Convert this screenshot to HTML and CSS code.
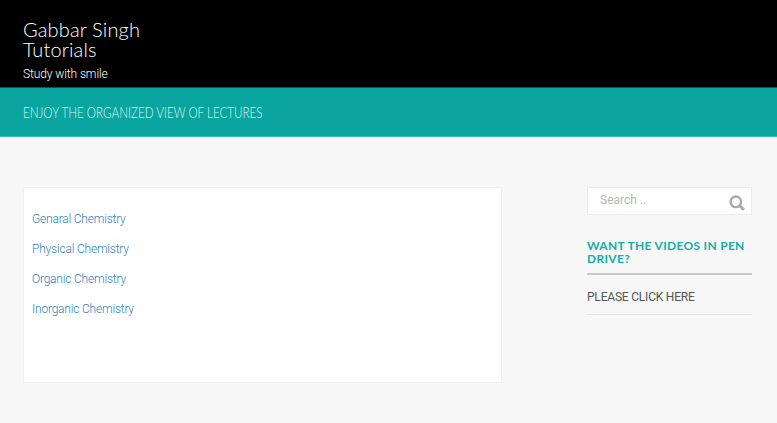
FILE: index.html
```html
<!DOCTYPE html>
<html lang="en">

<head>
	<meta charset="UTF-8" />
	<meta name="viewport" content="width=device-width, initial-scale=1.0" />
	<title>Gabbar Singh Tutorials</title>
	<link rel="stylesheet" href="styles.css">
</head>

<body>
	<header class="site-header">
		<h1 class="site-title">Gabbar Singh<br>Tutorials</h1>
		<p class="site-tagline">Study with smile</p>
	</header>

	<div class="page-banner">
		<h2 class="page-title">ENJOY THE ORGANIZED VIEW OF LECTURES</h2>
	</div>

	<div class="content-wrap">
		<main class="card">
			<p class="card-row"><a href="#">Genaral Chemistry</a></p>
			<p class="card-row"><a href="#">Physical Chemistry</a></p>
			<p class="card-row"><a href="#">Organic Chemistry</a></p>
			<p class="card-row"><a href="#">Inorganic Chemistry</a></p>
		</main>

		<aside class="sidebar">
			<form class="search">
				<span class="search-text">Search ..</span>
				<svg class="search-icon" width="16" height="16" viewBox="0 0 16 16">
					<circle cx="6.8" cy="6.8" r="5.3" fill="none" stroke="#aaa" stroke-width="2.4" />
					<path d="M10.8 10.8L14.8 14.8" stroke="#aaa" stroke-width="3" />
				</svg>
			</form>
			<h3 class="widget-title">WANT THE VIDEOS IN PEN DRIVE?</h3>
			<div class="widget-link">PLEASE CLICK HERE</div>
		</aside>
	</div>
</body>

</html>
```

FILE: styles.css
```css
html,
body {
	height: 100%;
}

body {
	margin: 0;
	background: #f7f7f7;
	font-family: "Roboto", "Lato", sans-serif;
	overflow: hidden;
}

/* header */
.site-header {
	height: 87px;
	box-sizing: border-box;
	padding: 19px 23px 0;
	background: #000;
	color: #fff;
}

.site-title {
	margin: 0;
	font-family: "Lato", sans-serif;
	font-size: 20px;
	line-height: 20px;
	font-weight: 300;
	letter-spacing: 0.15px;
}

.site-tagline {
	margin: 7px 0 0;
	font-size: 12px;
	line-height: 16px;
	font-weight: 300;
	letter-spacing: -0.1px;
}

/* banner */
.page-banner {
	height: 50px;
	box-sizing: border-box;
	padding-left: 23px;
	background: #0aa59f;
	border-top: 1px solid #1a4f4d;
	border-bottom: 1px solid #2fc0ba;
	display: flex;
	align-items: center;
}

.page-title {
	margin: 0;
	font-family: "Lato", sans-serif;
	font-size: 15px;
	font-weight: 300;
	color: #d8f5f2;
	transform: scaleX(0.775);
	transform-origin: left center;
	white-space: nowrap;
}

/* content */
.content-wrap {
	display: flex;
	justify-content: space-between;
	padding: 50px 25px 0 23px;
}

.card {
	width: 479px;
	height: 196px;
	box-sizing: border-box;
	padding: 21px 8px 0;
	background: #fff;
	border: 1px solid #f1f1f1;
}

.card-row {
	margin: 0 0 10px;
	font-size: 12px;
	line-height: 20px;
	font-weight: 300;
	letter-spacing: -0.2px;
}

.card-row a {
	color: #2f7fc4;
	text-decoration: none;
}

.sidebar {
	width: 165px;
}

.search {
	height: 28px;
	box-sizing: border-box;
	padding: 0 6px 0 12px;
	background: #fff;
	border: 1px solid #ececec;
	display: flex;
	align-items: center;
	justify-content: space-between;
}

.search-text {
	font-size: 12px;
	color: #b5b5b5;
	margin-top: -3px;
}

.search-icon {
	margin-top: 3px;
}

.widget-title {
	margin: 24px 0 0;
	padding-bottom: 8px;
	border-bottom: 2px solid #c8c8c8;
	font-family: "Lato", sans-serif;
	font-size: 12px;
	line-height: 13px;
	font-weight: 700;
	letter-spacing: 0.3px;
	color: #13aea6;
}

.widget-link {
	padding: 14px 0 8px;
	border-bottom: 1px solid #e4e4e4;
	font-size: 12px;
	line-height: 17px;
	letter-spacing: -0.2px;
	color: #555;
}
```
